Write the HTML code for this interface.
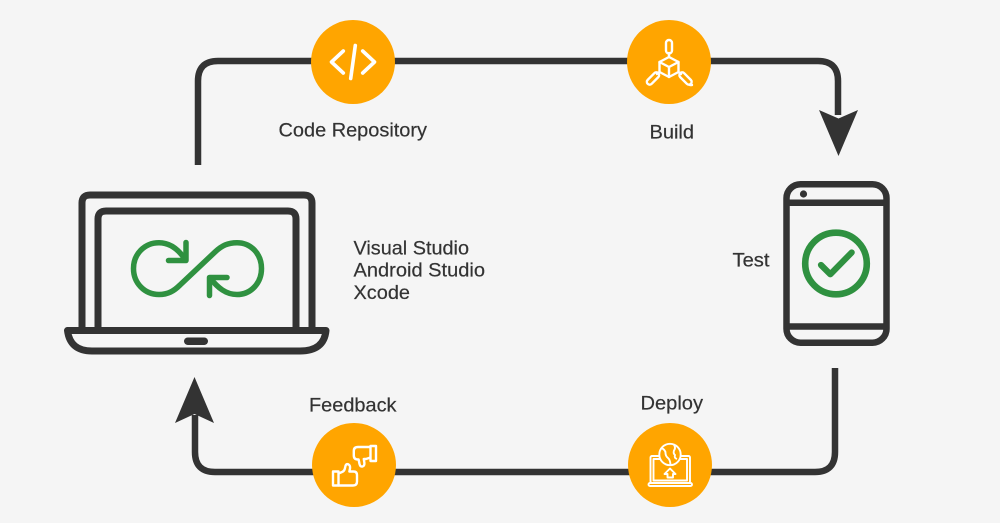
<!DOCTYPE html>
<html>
<head>
<meta charset="utf-8">
<style>
html,body{margin:0;padding:0;background:#f5f5f5;}
svg{display:block;}
text{font-family:"Liberation Sans",sans-serif;font-size:19.5px;fill:#333;stroke:#333;stroke-width:.2px;}
</style>
</head>
<body>
<svg width="1000" height="523" viewBox="0 0 1000 523" xmlns="http://www.w3.org/2000/svg">
<rect width="1000" height="523" fill="#f5f5f5"/>
<!-- flow lines -->
<g fill="none" stroke="#333" stroke-width="6.5">
<path d="M198,165 V81 Q198,61 218,61 H818 Q838,61 838,81 V115"/>
<path d="M835,368 V452 Q835,472 815,472 H215 Q195,472 195,452 V415"/>
</g>
<path d="M819,110 L838.5,118.5 L858,110 L838.5,156 Z" fill="#333"/>
<path d="M175,423 L194.5,414 L214,423 L194.5,377 Z" fill="#333"/>
<!-- circles -->
<circle cx="353" cy="62" r="42" fill="#ffa500"/>
<circle cx="669" cy="62" r="42" fill="#ffa500"/>
<circle cx="354" cy="465" r="42" fill="#ffa500"/>
<circle cx="670" cy="465" r="42" fill="#ffa500"/>
<!-- code icon -->
<g fill="none" stroke="#fff" stroke-width="3.6" stroke-linecap="round" stroke-linejoin="round">
<path d="M343.3,51 L331.5,62 L343.3,73"/>
<path d="M362.7,51 L374.5,62 L362.7,73"/>
<path d="M355.3,45.5 L350.7,78.5"/>
</g>
<!-- build icon -->
<g fill="none" stroke="#fff" stroke-width="2.4" stroke-linejoin="round" stroke-linecap="round">
<path d="M669,57 L678.5,62 V72 L669,77 L659.5,72 V62 Z"/>
<path d="M659.5,62 L669,67 L678.5,62 M669,67 V77"/>
<path d="M669,53 V57"/>
<rect x="666" y="40" width="6" height="13.5" rx="3"/>
<path d="M659.5,72 L657,74"/>
<path d="M678.5,72 L681,74"/>
<rect x="645.5" y="75.7" width="15" height="5.6" rx="2.8" transform="rotate(-45 653 78.5)"/>
<rect x="678" y="75.7" width="15" height="5.6" rx="2.8" transform="rotate(45 685.5 78.5)"/>
<path d="M690,85 L692,85"/>
</g>
<!-- feedback icon -->
<g fill="none" stroke="#fff" stroke-width="2.4" stroke-linejoin="round">
<rect x="370.5" y="446" width="5.5" height="15" />
<path d="M370.5,447 H358 Q353.8,447 353.8,451 V455.5 Q353.8,459.5 358,459.5 H358.6 L359.5,464 Q360.3,467 362.5,466.5 Q364.6,466 364.4,463 L363.8,459 H366 L370.5,457.5"/>
<rect x="333" y="471.5" width="5.5" height="14"/>
<path d="M338.5,473.5 L342,472 Q344.5,471 345,468 L345.6,465.5 Q346.6,463.5 348.6,464.5 Q350.4,465.5 350,468.5 L349.4,471.5 H353.5 Q357,471.5 357,475 V481.5 Q357,485.5 353,485.5 H338.5"/>
</g>
<!-- deploy icon -->
<g fill="none" stroke="#fff" stroke-width="1.9" stroke-linejoin="round">
<rect x="650.5" y="456" width="39.5" height="27" rx="1.5"/>
<rect x="653.5" y="459" width="33.5" height="21.5"/>
<rect x="648.5" y="483" width="43.5" height="3" rx="1.5"/>
<circle cx="670" cy="454.5" r="10.7" fill="#ffa500"/>
<path d="M661.5,448 Q665.5,450 665.5,453 Q665.5,456 668,458 Q670,459.5 670.5,464.5"/>
<path d="M674,444.8 Q676,448 674,450.5 Q673,453.5 675,455 Q674,458 677,459"/>
<path d="M670,468.5 L664.5,474 H667.5 V477.5 H673 V474 H675.5 Z"/>
</g>
<!-- laptop -->
<g fill="none" stroke="#333" stroke-width="7" stroke-linejoin="round">
<path d="M82,328 V203 Q82,195 90,195 H304 Q312,195 312,203 V328"/>
<path d="M98,328 V219 Q98,211 106,211 H288 Q296,211 296,219 V328"/>
<path d="M67.5,330.5 H326 Q324,351 300,351 H92 Q70,351 67.5,330.5 Z"/>
</g>
<rect x="184" y="337.5" width="24" height="7.5" rx="3.7" fill="#333"/>
<!-- infinity -->
<g fill="none" stroke="#2f9140" stroke-width="5.5" stroke-linecap="round" stroke-linejoin="round">
<path d="M184.5,258.5 C178,249 170,242.7 159,242.7 C144.5,242.7 133.5,254 133.5,268.5 C133.5,283 144.5,294.5 159,294.5 C168,294.5 174,291 180,285 L215,252 C222,245.5 228,242.7 237,242.7 C251,242.7 261.5,254 261.5,268.5 C261.5,283 251,294.5 237,294.5 C226,294.5 218,288 210,278"/>
<path d="M186,242.5 V260.5 H168.5"/>
<path d="M209.5,295.5 V277.5 H227"/>
</g>
<!-- phone -->
<g fill="none" stroke="#333" stroke-width="6.5">
<rect x="786.5" y="184.2" width="100" height="158.5" rx="14"/>
<path d="M786.5,202.7 H886.5"/>
<path d="M786.5,326.5 H886.5"/>
</g>
<circle cx="803.5" cy="194" r="3.6" fill="#333"/>
<circle cx="836" cy="263.5" r="30.8" fill="none" stroke="#2f9140" stroke-width="6.6"/>
<path d="M821,265 L830.3,274.3 L851.7,252.5" fill="none" stroke="#2f9140" stroke-width="6.2" stroke-linecap="round" stroke-linejoin="round"/>
<!-- labels -->
<text x="278.5" y="136.5" textLength="148.5" lengthAdjust="spacingAndGlyphs">Code Repository</text>
<text x="649.5" y="138.5" textLength="44.5" lengthAdjust="spacingAndGlyphs">Build</text>
<text x="353.5" y="254.5" textLength="115.5" lengthAdjust="spacingAndGlyphs">Visual Studio</text>
<text x="353.5" y="276.5" textLength="131.5" lengthAdjust="spacingAndGlyphs">Android Studio</text>
<text x="353.5" y="299" textLength="56.5" lengthAdjust="spacingAndGlyphs">Xcode</text>
<text x="732.5" y="266.5" textLength="37" lengthAdjust="spacingAndGlyphs">Test</text>
<text x="309" y="411.5" textLength="87.5" lengthAdjust="spacingAndGlyphs">Feedback</text>
<text x="640.5" y="409.5" textLength="62.5" lengthAdjust="spacingAndGlyphs">Deploy</text>
</svg>
</body>
</html>
